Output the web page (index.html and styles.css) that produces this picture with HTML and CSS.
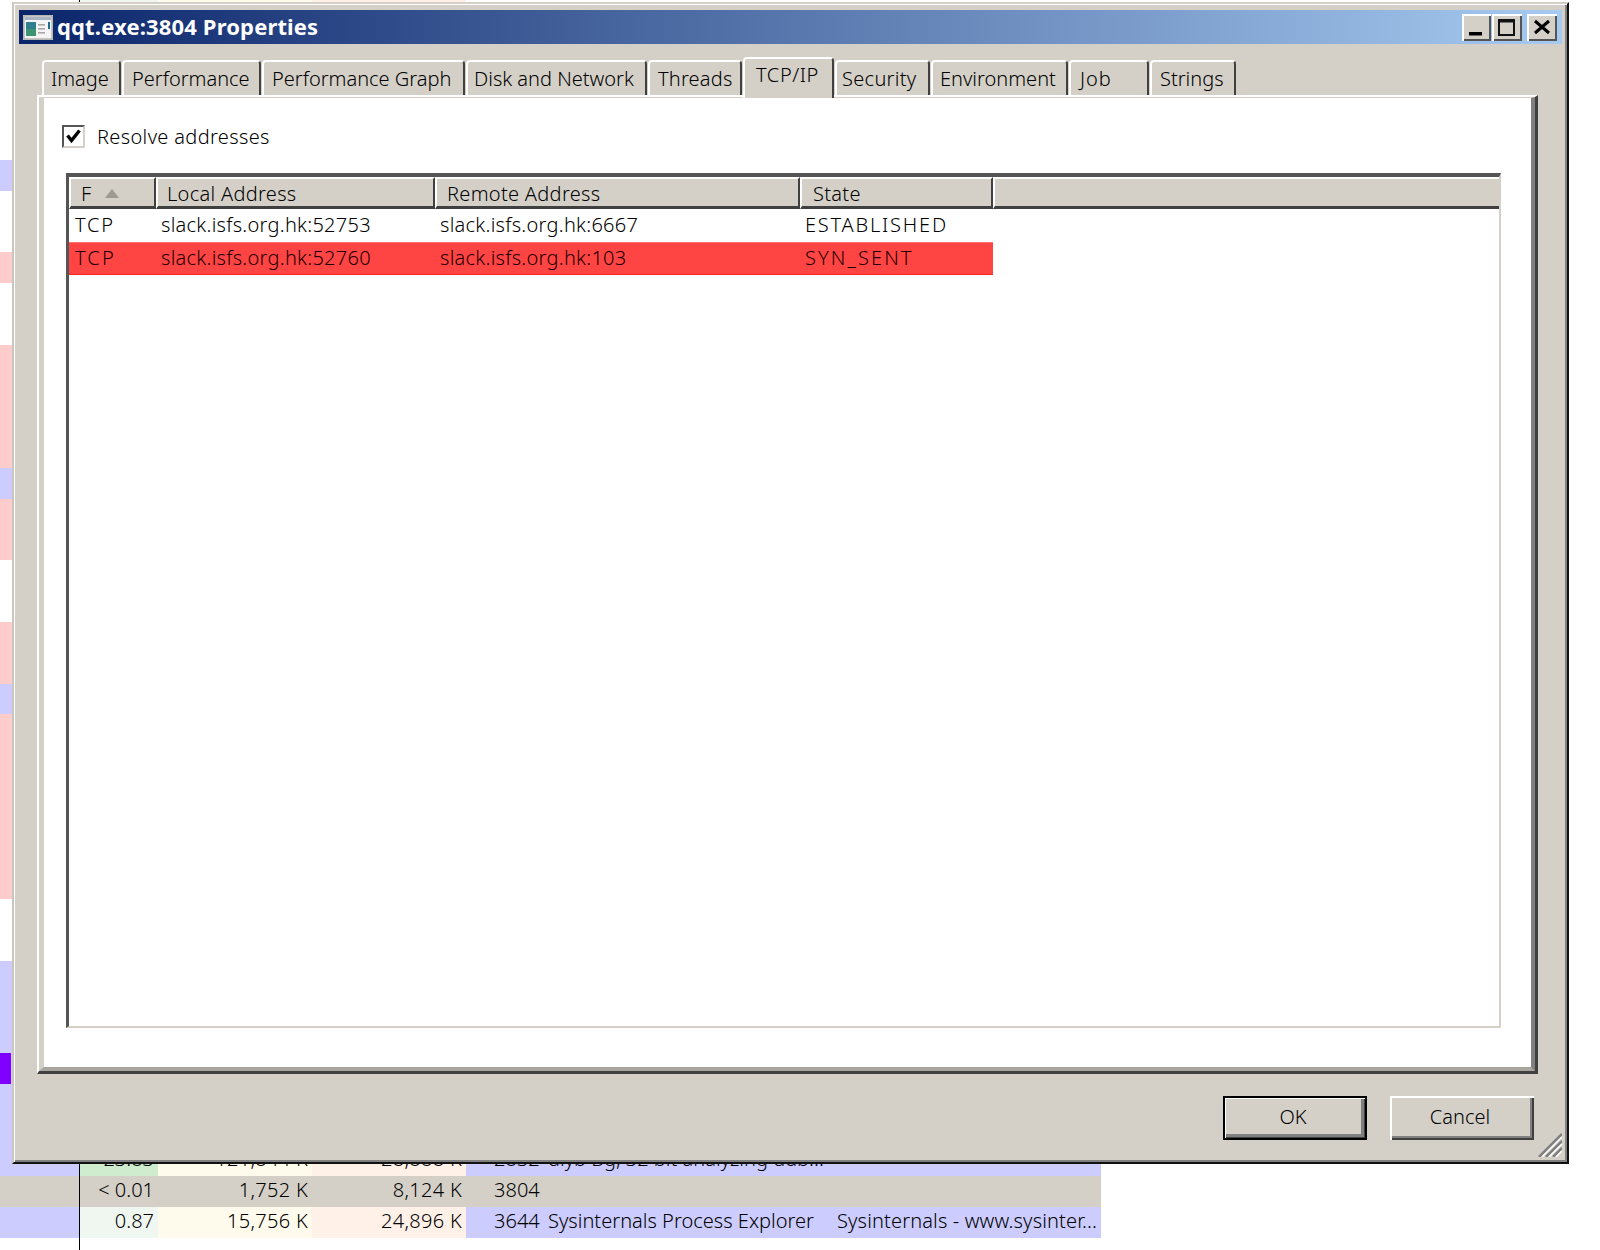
FILE: index.html
```html
<!DOCTYPE html>
<html lang="en">
<head>
<meta charset="utf-8">
<title>qqt.exe:3804 Properties</title>
<link rel="stylesheet" href="styles.css">
</head>
<body>
<div class="proclist">
  <div class="row row-top"><span class="c0"></span><span class="c1 g"></span><span class="c2 y"></span><span class="c3 p"></span><span class="c4"></span></div>
  <div class="row"></div><div class="row"></div><div class="row"></div><div class="row"></div><div class="row"></div>
  <div class="row blue"></div><div class="row"></div><div class="row"></div>
  <div class="row pink"></div><div class="row"></div><div class="row"></div>
  <div class="row pink"></div><div class="row pink"></div><div class="row pink"></div><div class="row pink"></div>
  <div class="row blue"></div><div class="row pink"></div><div class="row pink"></div>
  <div class="row"></div><div class="row"><span class="c0 cut">at</span></div>
  <div class="row pink"></div><div class="row pink"></div><div class="row blue"></div>
  <div class="row pink"></div><div class="row pink"></div><div class="row pink"></div><div class="row pink"></div><div class="row pink"></div><div class="row pink"></div>
  <div class="row"></div><div class="row"></div>
  <div class="row blue"></div><div class="row blue"></div><div class="row blue"></div>
  <div class="row purple"></div>
  <div class="row blue"></div><div class="row blue"></div>
  <div class="row blue"><span class="c0"></span><span class="c1 g2">23.83</span><span class="c2 y">121,844 K</span><span class="c3 p">28,888 K</span><span class="c4"><span class="pid">2832</span><span class="desc">diyb Bg, 32 bit analyzing dub...</span></span></div>
  <div class="row tan"><span class="c0"></span><span class="c1">&lt; 0.01</span><span class="c2">1,752 K</span><span class="c3">8,124 K</span><span class="c4"><span class="pid">3804</span></span></div>
  <div class="row blue"><span class="c0"></span><span class="c1 g">0.87</span><span class="c2 y">15,756 K</span><span class="c3 p">24,896 K</span><span class="c4"><span class="pid">3644</span><span class="desc">Sysinternals Process Explorer</span><span class="comp">Sysinternals - www.sysinter...</span></span></div>
  <div class="row tail"><span class="c0"></span><span class="c1"></span></div>
</div>

<div class="window">
  <div class="titlebar">
    <svg class="appicon" viewBox="0 0 30 25" aria-hidden="true">
      <rect x="0" y="0" width="30" height="25" fill="#d4d0c8"/>
      <rect x="1" y="1" width="28" height="23" fill="#f4f4f4" stroke="#9a9a9a"/>
      <rect x="2" y="2" width="26" height="3" fill="#a9b4c4"/>
      <rect x="3" y="7" width="10" height="14" fill="#2f7f8f"/>
      <rect x="3" y="14" width="10" height="7" fill="#3d9470"/>
      <rect x="15" y="9" width="7" height="1.6" fill="#a8a8a8"/>
      <rect x="15" y="13" width="7" height="1.6" fill="#a8a8a8"/>
      <rect x="15" y="17" width="7" height="1.6" fill="#a8a8a8"/>
      <rect x="25" y="7" width="2" height="7" fill="#1c6f8a"/>
    </svg>
    <span class="title">qqt.exe:3804 Properties</span>
    <div class="caps">
      <button class="cap cap-min" type="button" aria-label="Minimize"><svg viewBox="0 0 29 27"><rect x="7" y="18" width="13" height="3.5" fill="#000"/></svg></button>
      <button class="cap cap-max" type="button" aria-label="Maximize"><svg viewBox="0 0 30 27"><path d="M7 6h15v15H7z M7 7.5h15" fill="none" stroke="#111" stroke-width="2"/></svg></button>
      <button class="cap cap-close" type="button" aria-label="Close"><svg viewBox="0 0 30 27"><path d="M8 7l14 12M22 7L8 19" fill="none" stroke="#000" stroke-width="3"/></svg></button>
    </div>
  </div>

  <div class="tabs">
    <div class="tab t-image">Image</div>
    <div class="tab t-perf">Performance</div>
    <div class="tab t-graph">Performance Graph</div>
    <div class="tab t-disk">Disk and Network</div>
    <div class="tab t-threads">Threads</div>
    <div class="tab tab-active t-tcp">TCP/IP</div>
    <div class="tab t-sec">Security</div>
    <div class="tab t-env">Environment</div>
    <div class="tab t-job">Job</div>
    <div class="tab t-str">Strings</div>
  </div>

  <div class="panel">
    <div class="panel-inner">
      <label class="check">
        <span class="box"><svg viewBox="0 0 19 19"><path d="M3.5 8.5l4 5 8-10" fill="none" stroke="#000" stroke-width="3.4"/></svg></span>
        <span class="check-label">Resolve addresses</span>
      </label>
      <div class="list">
        <div class="head">
          <div class="hcell h-proto">F<svg class="sort" viewBox="0 0 14 9"><path d="M7 0l7 9H0z" fill="#9d9a93"/></svg></div>
          <div class="hcell h-local">Local Address</div>
          <div class="hcell h-remote">Remote Address</div>
          <div class="hcell h-state">State</div>
          <div class="hcell h-rest"></div>
        </div>
        <div class="lrow">
          <span class="caps-text">TCP</span><span>slack.isfs.org.hk:52753</span><span>slack.isfs.org.hk:6667</span><span class="caps-text">ESTABLISHED</span>
        </div>
        <div class="lrow lrow-red">
          <span class="caps-text">TCP</span><span>slack.isfs.org.hk:52760</span><span>slack.isfs.org.hk:103</span><span class="caps-text">SYN_SENT</span>
        </div>
      </div>
    </div>
  </div>

  <div class="footer">
    <button class="btn btn-default" type="button">OK</button>
    <button class="btn" type="button">Cancel</button>
  </div>

  <svg class="grip" viewBox="0 0 24 24" aria-hidden="true">
    <path d="M24 1L1 24M24 8L8 24M24 15L15 24" stroke="#808080" stroke-width="2.5" fill="none"/>
    <path d="M24 4L4 24M24 11L11 24M24 18L18 24" stroke="#fff" stroke-width="1.5" fill="none"/>
  </svg>
</div>
</body>
</html>
```
FILE: styles.css
```css
* { box-sizing: border-box; }
html, body { margin: 0; padding: 0; }
body {
  width: 1600px;
  height: 1250px;
  overflow: hidden;
  position: relative;
  background: #fff;
  font-family: "Noto Sans", "DejaVu Sans", sans-serif;
  font-size: 20px;
  font-weight: 300;
  color: #000;
}

/* process list behind the dialog */
.proclist { width: 1101px; }
.row {
  display: grid;
  grid-template-columns: 79px 79px 154px 154px 635px;
  height: 30.8px;
  line-height: 27px;
}
.row-top { height: 6px; overflow: hidden; }
.row > span { display: block; text-align: right; padding-right: 4px; white-space: nowrap; letter-spacing: 0.3px; }
.row .c0 { padding: 0; }
.row .c1 { border-left: 1px solid #000; padding-right: 4px; letter-spacing: 0; }
.row .c4 { display: flex; text-align: left; padding: 0 0 0 28px; letter-spacing: 0.02px; }
.row.tail { height: 12px; }
.row.blue { background: #ccccff; }
.row.pink { background: linear-gradient(to right, #ffcccc 0 79px, transparent 79px); }
.row.purple { background: linear-gradient(to right, #8000ff 0 11px, #ccccff 11px); }
.row.tan { background: #d4d0c8; }
.g { background: #eff7f0; }
.g2 { background: #cfeccf; }
.y { background: #fffbec; }
.p { background: #fff0e8; }
.cut { text-align: left; font-size: 19px; line-height: 29px; }
.pid { width: 54px; flex: none; }
.desc { width: 289px; flex: none; }
.comp { flex: none; letter-spacing: 0.15px; }

/* dialog window */
.window {
  position: absolute;
  left: 12px;
  top: 2px;
  width: 1557px;
  height: 1162px;
  padding: 6px 5px 0;
  background: #d4d0c8;
  border: 2px solid;
  border-color: #d4d0c8 #111 #111 #c9c6be;
  box-shadow: inset 1px 1px 0 #fff, inset -2px -2px 0 #808080;
}
.titlebar {
  display: flex;
  align-items: center;
  height: 34px;
  padding-left: 4px;
  background: linear-gradient(to right, #0a246a, #a6caf0);
  color: #fff;
}
.appicon { width: 30px; height: 25px; flex: none; }
.title {
  margin-left: 4px;
  padding-bottom: 2px;
  font-weight: 700;
  font-size: 22px;
  letter-spacing: 0.15px;
  white-space: nowrap;
}
.caps { margin-left: auto; display: flex; padding-right: 5px; }
.cap {
  width: 29px;
  height: 27px;
  margin: 0;
  padding: 0;
  border: 0;
  background: #d4d0c8;
  box-shadow: inset 2px 2px 0 #fff, inset -2px -2px 0 #555;
}
.cap svg { display: block; width: 100%; height: 27px; }
.cap-max { margin-left: 1px; width: 30px; }
.cap-close { margin-left: 5px; width: 30px; }

.tabs {
  display: flex;
  margin: 16px 0 0 23px;
  height: 35px;
  gap: 1px;
}
.tab {
  position: relative;
  height: 35px;
  padding-left: 8px;
  line-height: 33px;
  white-space: nowrap;
  background: #d4d0c8;
  border-top: 2px solid #fff;
  border-left: 2px solid #fff;
  border-right: 2px solid #404040;
  border-radius: 4px 4px 0 0;
}
.tab-active {
  z-index: 2;
  height: 41px;
  margin-top: -3px;
  padding-left: 11px;
  line-height: 32px;
  letter-spacing: 0.6px;
}
.t-image { width: 79px; padding-left: 7px; }
.t-perf { width: 139px; }
.t-graph { width: 203px; }
.t-disk { width: 181px; padding-left: 6px; }
.t-threads { width: 94px; letter-spacing: 0.2px; }
.t-tcp { width: 91px; }
.t-sec { width: 95px; padding-left: 5px; letter-spacing: 0.3px; }
.t-env { width: 137px; padding-left: 7px; }
.t-job { width: 80px; padding-left: 9px; letter-spacing: 1px; }
.t-str { width: 86px; }

.panel {
  position: relative;
  margin-left: 18px;
  width: 1501px;
  height: 979px;
  background: #fff;
  border: solid;
  border-width: 2px 3px 3px 2px;
  border-color: #fff #404040 #404040 #fff;
}
.panel-inner {
  height: 100%;
  padding: 27px 0 0 18px;
  border: solid;
  border-width: 1px 4px 4px 5px;
  border-color: #d4d0c8 #808080 #a8a59e #d4d0c8;
}
.check {
  display: flex;
  align-items: center;
  height: 23px;
  gap: 12px;
  line-height: 31px;
}
.check-label { letter-spacing: 0.35px; }
.box {
  width: 23px;
  height: 23px;
  background: #fff;
  border: 2px solid;
  border-color: #555 #d4d0c8 #d4d0c8 #555;
}
.box svg { display: block; width: 19px; height: 19px; }

.list {
  margin: 25px 0 0 4px;
  width: 1435px;
  height: 855px;
  border: solid;
  border-width: 4px 2px 2px 3px;
  border-color: #555 #d4d0c8 #d4d0c8 #555;
  background: #fff;
}
.head { display: flex; height: 32px; background: #d4d0c8; }
.hcell {
  position: relative;
  height: 32px;
  padding-left: 9px;
  line-height: 29px;
  letter-spacing: 0.3px;
  border-top: 2px solid #fff;
  border-left: 2px solid #fff;
  border-right: 2px solid #404040;
  border-bottom: 3px solid #404040;
}
.h-proto { width: 87px; padding-left: 10px; }
.h-local { width: 279px; }
.h-remote { width: 365px; padding-left: 10px; }
.h-state { width: 193px; padding-left: 11px; }
.h-rest { flex: 1; border-right: 0; }
.sort { position: absolute; left: 34px; top: 10px; width: 14px; height: 9px; }

.lrow {
  display: grid;
  grid-template-columns: 86px 279px 365px 188px;
  width: 924px;
  height: 33px;
  line-height: 31px;
  letter-spacing: 0.27px;
  padding-left: 6px;
  white-space: nowrap;
}
.caps-text { letter-spacing: 1.8px; }
.lrow-red {
  height: 33px;
  line-height: 29px;
  background: #ff4444;
  border-top: 1px solid #ff7070;
  border-bottom: 1px solid #ff2020;
  color: #200;
}
.lrow-red .caps-text { letter-spacing: 2.1px; }

.footer {
  display: flex;
  justify-content: flex-end;
  gap: 23px;
  margin-top: 22px;
  padding-right: 28px;
}
.btn {
  width: 144px;
  height: 44px;
  margin: 0;
  padding: 0 4px 4px 0;
  border: 0;
  background: #d4d0c8;
  font: inherit;
  color: inherit;
  box-shadow: inset 2px 2px 0 #fff, inset -2px -2px 0 #404040, inset -4px -4px 0 #808080;
}
.btn-default {
  box-shadow: inset 0 0 0 2px #000, inset 3px 3px 0 #fff, inset -3px -3px 0 #404040, inset -6px -6px 0 #808080;
}
.grip {
  position: absolute;
  right: 5px;
  bottom: 5px;
  width: 24px;
  height: 24px;
}
```
